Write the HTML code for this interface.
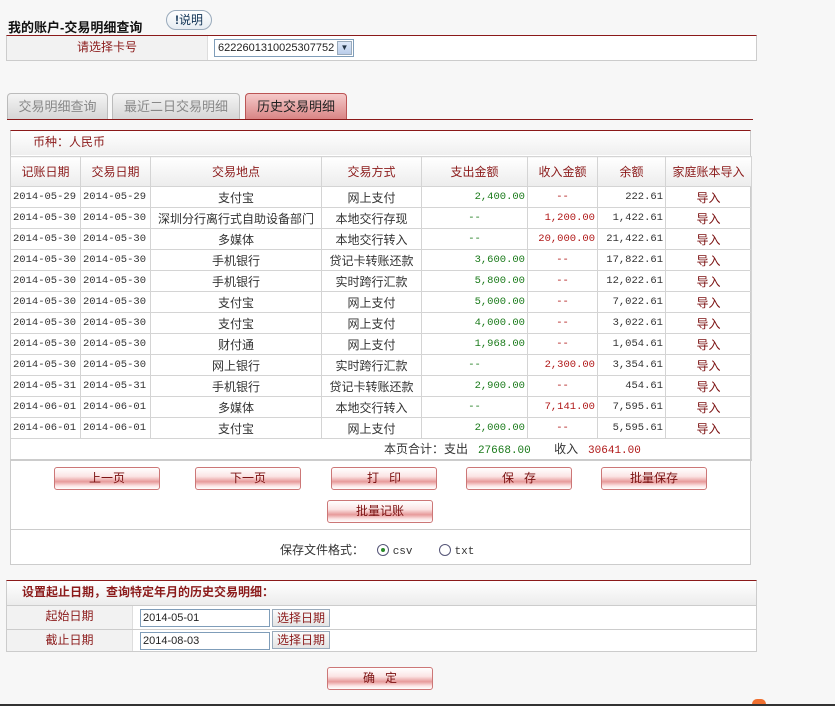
<!DOCTYPE html>
<html><head><meta charset="utf-8"><style>
*{box-sizing:border-box;margin:0;padding:0}
body{width:835px;height:706px;background:#f7f7f7;font-family:"Liberation Sans","Noto Sans CJK SC",sans-serif;font-size:12px;color:#333;position:relative;overflow:hidden}
.a{position:absolute}
.title{left:8px;top:17px;font-weight:bold;font-size:13px;color:#111}
.help{left:166px;top:10px;width:46px;height:20px;border:1px solid #9ab;border-radius:10px;background:linear-gradient(#fff,#e6ecf2);font-size:12px;color:#135;text-align:center;line-height:18px}
.cardbox{left:6px;top:35px;width:751px;height:26px;border:1px solid #ccc;border-top:1px solid #8b1a1a;background:#fff}
.cardbox .lb{position:absolute;left:0;top:0;width:201px;height:24px;background:#f2f2f2;border-right:1px solid #ddd;color:#8b1a1a;text-align:center;line-height:22px}
.sel{left:214px;top:39px;width:140px;height:18px;border:1px solid #7f9db9;background:#fff;font-size:11px;line-height:16px;padding-left:3px;color:#222}
.sel i{position:absolute;right:1px;top:1px;width:15px;height:14px;background:linear-gradient(#dde8f8,#b9cdea);border:1px solid #9ab;font-style:normal;font-size:8px;line-height:12px;text-align:center;color:#234}
.tab{top:93px;height:26px;border:1px solid #bbb;border-bottom:none;border-radius:4px 4px 0 0;background:linear-gradient(#f4f4f4,#d6d6d6);color:#888;font-size:13px;text-align:center;line-height:25px}
.tab.on{background:linear-gradient(#f5c9c9,#d98585);color:#222;border-color:#b55}
.tline{left:7px;top:119px;width:746px;height:1px;background:#8b1a1a}
.panel{left:10px;top:130px;width:741px;height:435px;background:#fff;border:1px solid #ccc;border-top:1px solid #8b1a1a}
.cur{left:11px;top:131px;width:739px;height:24px;background:linear-gradient(#fff,#efefef);color:#8b1a1a;line-height:22px;padding-left:22px}
table{border-collapse:collapse;table-layout:fixed}
.tb{left:10px;top:156px;width:741px}
.tb td{border:1px solid #d4d4d4;height:21px;font-size:10.5px;font-family:"Liberation Mono","Noto Sans CJK SC",monospace;white-space:nowrap;overflow:hidden;padding:0 2px}
.tb td.z{font-family:"Liberation Sans","Noto Sans CJK SC",sans-serif;font-size:12px;text-align:center}
.tb tr.h td{height:30px;background:linear-gradient(#fff,#ececec);color:#8b1a1a;font-family:"Liberation Sans","Noto Sans CJK SC",sans-serif;font-size:12px;text-align:center}
.g{color:#1a7a1a;text-align:right}.r{color:#b01818;text-align:right}.n{text-align:right}.c{text-align:center!important}
.btn{width:106px;height:23px;border:1px solid #c77;border-radius:3px;background:linear-gradient(#fff 0%,#fbe4e4 40%,#e79a9a 65%,#fbe4e4 85%,#fff);color:#7a0f0f;text-align:center;line-height:20px;font-size:12px}
.sep{left:11px;top:529px;width:739px;height:1px;background:#ccc}
.fmt{left:280px;top:541px;font-size:12px;color:#333}
.rad{width:12px;height:12px;border:1px solid #557;border-radius:50%;display:inline-block;vertical-align:-2px;background:#fff;position:relative}
.rad.on:after{content:"";position:absolute;left:3px;top:3px;width:4px;height:4px;border-radius:50%;background:#2a8a2a}
.p2{left:6px;top:580px;width:751px;height:72px;background:#fff;border:1px solid #ccc;border-top:1px solid #8b1a1a}
.p2h{left:7px;top:581px;width:749px;height:24px;background:linear-gradient(#fff,#ececec);color:#8b1a1a;font-weight:bold;line-height:22px;padding-left:15px;font-size:12px}
.row2{left:7px;width:749px;height:1px;background:#ccc}
.lb2{left:7px;width:126px;height:23px;background:#f2f2f2;border-right:1px solid #ddd;color:#8b1a1a;text-align:center;line-height:21px}
.inp{left:140px;width:130px;height:18px;border:1px solid #7f9db9;background:#fff;font-size:11px;line-height:16px;padding-left:2px;color:#222}
.sb{left:272px;width:58px;height:18px;border:1px solid #9ab;background:linear-gradient(#fbfbfb,#e4e4e4);color:#8b1a1a;text-align:center;line-height:16px;font-size:12px}
</style></head><body>
<div class="a title">我的账户-交易明细查询</div>
<div class="a help"><b>!</b>说明</div>
<div class="a cardbox"><div class="lb">请选择卡号</div></div>
<div class="a sel">6222601310025307752<i>&#9660;</i></div>

<div class="a tab" style="left:7px;width:101px">交易明细查询</div>
<div class="a tab" style="left:112px;width:128px">最近二日交易明细</div>
<div class="a tab on" style="left:245px;width:102px">历史交易明细</div>
<div class="a tline"></div>

<div class="a panel"></div>
<div class="a cur">币种：人民币</div>
<table class="a tb">
<colgroup><col style="width:70px"><col style="width:70px"><col style="width:171px"><col style="width:100px"><col style="width:106px"><col style="width:70px"><col style="width:68px"><col style="width:86px"></colgroup>
<tr class="h"><td>记账日期</td><td>交易日期</td><td>交易地点</td><td>交易方式</td><td>支出金额</td><td>收入金额</td><td>余额</td><td>家庭账本导入</td></tr>
<tr><td>2014-05-29</td><td>2014-05-29</td><td class="z">支付宝</td><td class="z">网上支付</td><td class="g">2,400.00</td><td class="r c">--</td><td class="n">222.61</td><td class="z" style="color:#7a0f0f">导入</td></tr>
<tr><td>2014-05-30</td><td>2014-05-30</td><td class="z">深圳分行离行式自助设备部门</td><td class="z">本地交行存现</td><td class="g c">--</td><td class="r">1,200.00</td><td class="n">1,422.61</td><td class="z" style="color:#7a0f0f">导入</td></tr>
<tr><td>2014-05-30</td><td>2014-05-30</td><td class="z">多媒体</td><td class="z">本地交行转入</td><td class="g c">--</td><td class="r">20,000.00</td><td class="n">21,422.61</td><td class="z" style="color:#7a0f0f">导入</td></tr>
<tr><td>2014-05-30</td><td>2014-05-30</td><td class="z">手机银行</td><td class="z">贷记卡转账还款</td><td class="g">3,600.00</td><td class="r c">--</td><td class="n">17,822.61</td><td class="z" style="color:#7a0f0f">导入</td></tr>
<tr><td>2014-05-30</td><td>2014-05-30</td><td class="z">手机银行</td><td class="z">实时跨行汇款</td><td class="g">5,800.00</td><td class="r c">--</td><td class="n">12,022.61</td><td class="z" style="color:#7a0f0f">导入</td></tr>
<tr><td>2014-05-30</td><td>2014-05-30</td><td class="z">支付宝</td><td class="z">网上支付</td><td class="g">5,000.00</td><td class="r c">--</td><td class="n">7,022.61</td><td class="z" style="color:#7a0f0f">导入</td></tr>
<tr><td>2014-05-30</td><td>2014-05-30</td><td class="z">支付宝</td><td class="z">网上支付</td><td class="g">4,000.00</td><td class="r c">--</td><td class="n">3,022.61</td><td class="z" style="color:#7a0f0f">导入</td></tr>
<tr><td>2014-05-30</td><td>2014-05-30</td><td class="z">财付通</td><td class="z">网上支付</td><td class="g">1,968.00</td><td class="r c">--</td><td class="n">1,054.61</td><td class="z" style="color:#7a0f0f">导入</td></tr>
<tr><td>2014-05-30</td><td>2014-05-30</td><td class="z">网上银行</td><td class="z">实时跨行汇款</td><td class="g c">--</td><td class="r">2,300.00</td><td class="n">3,354.61</td><td class="z" style="color:#7a0f0f">导入</td></tr>
<tr><td>2014-05-31</td><td>2014-05-31</td><td class="z">手机银行</td><td class="z">贷记卡转账还款</td><td class="g">2,900.00</td><td class="r c">--</td><td class="n">454.61</td><td class="z" style="color:#7a0f0f">导入</td></tr>
<tr><td>2014-06-01</td><td>2014-06-01</td><td class="z">多媒体</td><td class="z">本地交行转入</td><td class="g c">--</td><td class="r">7,141.00</td><td class="n">7,595.61</td><td class="z" style="color:#7a0f0f">导入</td></tr>
<tr><td>2014-06-01</td><td>2014-06-01</td><td class="z">支付宝</td><td class="z">网上支付</td><td class="g">2,000.00</td><td class="r c">--</td><td class="n">5,595.61</td><td class="z" style="color:#7a0f0f">导入</td></tr>
<tr><td colspan="8" style="border-bottom:2px solid #ccc;padding-left:373px;font-family:'Liberation Sans','Noto Sans CJK SC',sans-serif;font-size:12px">本页合计：支出 <span style="color:#1a7a1a;font-family:'Liberation Mono',monospace;font-size:11px">&nbsp;27668.00</span>&nbsp;&nbsp;&nbsp;&nbsp;&nbsp;&nbsp;&nbsp;收入 <span style="color:#b01818;font-family:'Liberation Mono',monospace;font-size:11px">&nbsp;30641.00</span></td></tr>
</table>
<div class="a btn" style="left:54px;top:467px">上一页</div>
<div class="a btn" style="left:195px;top:467px">下一页</div>
<div class="a btn" style="left:331px;top:467px">打&nbsp;&nbsp;&nbsp;印</div>
<div class="a btn" style="left:466px;top:467px">保&nbsp;&nbsp;&nbsp;存</div>
<div class="a btn" style="left:601px;top:467px">批量保存</div>
<div class="a btn" style="left:327px;top:500px">批量记账</div>
<div class="a sep"></div>
<div class="a fmt">保存文件格式：&nbsp;&nbsp;&nbsp;&nbsp;<span class="rad on"></span> <span style="font-family:'Liberation Mono',monospace;font-size:11px">csv</span>&nbsp;&nbsp;&nbsp;&nbsp;&nbsp;&nbsp;&nbsp;&nbsp;<span class="rad"></span> <span style="font-family:'Liberation Mono',monospace;font-size:11px">txt</span></div>

<div class="a p2"></div>
<div class="a p2h">设置起止日期，查询特定年月的历史交易明细：</div>
<div class="a row2" style="top:605px"></div>
<div class="a lb2" style="top:606px">起始日期</div>
<div class="a inp" style="top:609px">2014-05-01</div>
<div class="a sb" style="top:609px">选择日期</div>
<div class="a row2" style="top:629px"></div>
<div class="a lb2" style="top:630px;height:21px">截止日期</div>
<div class="a inp" style="top:632px">2014-08-03</div>
<div class="a sb" style="top:631px">选择日期</div>

<div class="a btn" style="left:327px;top:667px">确&nbsp;&nbsp;&nbsp;定</div>
<div class="a" style="left:0;top:704px;width:835px;height:2px;background:#333"></div>
<div class="a" style="left:752px;top:699px;width:14px;height:5px;background:#f07030;border-radius:6px 6px 0 0"></div>
</body></html>
